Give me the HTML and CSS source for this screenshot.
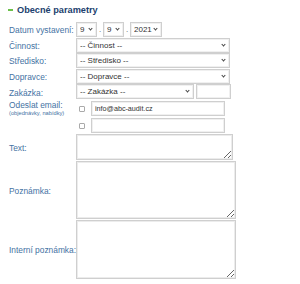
FILE: index.html
```html
<!DOCTYPE html>
<html>
<head>
    <title>Obecné parametry</title>
    <link rel="stylesheet" href="styles.css">
</head>
<body>

<h2 class="title"><span class="dash"></span>Obecné parametry</h2>

<div class="form">
    <label class="lbl">Datum vystavení:</label>
    <div class="ctrl date">
        <span class="sel w-day"><select><option>9</option></select></span>
        <span class="dot">.</span>
        <span class="sel w-day"><select><option>9</option></select></span>
        <span class="dot">.</span>
        <span class="sel w-year"><select><option>2021</option></select></span>
    </div>

    <label class="lbl">Činnost:</label>
    <div class="ctrl">
        <span class="sel w-full"><select><option>-- Činnost --</option></select></span>
    </div>

    <label class="lbl">Středisko:</label>
    <div class="ctrl">
        <span class="sel w-full"><select><option>-- Středisko --</option></select></span>
    </div>

    <label class="lbl">Dopravce:</label>
    <div class="ctrl">
        <span class="sel w-full"><select><option>-- Dopravce --</option></select></span>
    </div>

    <label class="lbl">Zakázka:</label>
    <div class="ctrl">
        <span class="sel w-short"><select><option>-- Zakázka --</option></select></span>
        <input type="text" class="txt w-code">
    </div>

    <label class="lbl top">Odeslat email:<small>(objednávky, nabídky)</small></label>
    <div class="ctrl">
        <input type="checkbox" class="chk">
        <input type="text" class="txt w-mail" value="info@abc-audit.cz">
    </div>

    <span></span>
    <div class="ctrl">
        <input type="checkbox" class="chk">
        <input type="text" class="txt w-mail">
    </div>

    <label class="lbl">Text:</label>
    <div class="ctrl area">
        <textarea class="w-text"></textarea>
    </div>

    <label class="lbl">Poznámka:</label>
    <div class="ctrl area">
        <textarea class="w-note"></textarea>
    </div>

    <label class="lbl">Interní poznámka:</label>
    <div class="ctrl area">
        <textarea class="w-note"></textarea>
    </div>
</div>

</body>
</html>
```

FILE: styles.css
```css
body {
    margin: 0;
    padding: 0 0 0 8px;
    font-family: "Liberation Sans", Arial, sans-serif;
    background: #fff;
}

.title {
    display: flex;
    align-items: center;
    margin: 4px 0 0 0;
    height: 12px;
    font-size: 9.2px;
    font-weight: bold;
    color: #1c3f6e;
}

.dash {
    width: 5px;
    height: 2px;
    background: #6cc04a;
    margin-right: 4px;
}

.form {
    display: grid;
    grid-template-columns: 68px auto;
    grid-template-rows: 16px 15px 16px 15px 17px 17px 16px 27px 59px 60px;
    margin-top: 6px;
}

.lbl {
    align-self: center;
    padding-left: 1px;
    font-size: 8.4px;
    line-height: 10px;
    color: #4472a3;
    white-space: nowrap;
}

.lbl.top {
    align-self: start;
    padding-top: 0;
    line-height: 9px;
}

.lbl small {
    display: block;
    font-size: 5.7px;
    line-height: 6px;
    color: #4472a3;
}

.ctrl {
    display: flex;
    align-items: flex-start;
}

.date .dot {
    width: 6px;
    text-align: center;
    font-size: 8px;
    color: #555;
    line-height: 15px;
}

.sel {
    position: relative;
    display: block;
    height: 15px;
}

.sel select {
    appearance: none;
    -webkit-appearance: none;
    display: block;
    box-sizing: border-box;
    width: 100%;
    height: 15px;
    margin: 0;
    padding: 0 0 0 3px;
    line-height: 13px;
    border: 1px solid #cfcfcf;
    box-shadow: inset 0 0 0 1px #f0f0f0;
    border-radius: 0;
    background: #fff;
    font-family: "Liberation Sans", Arial, sans-serif;
    font-size: 8px;
    color: #333;
}

.sel::after {
    content: "";
    position: absolute;
    right: 5px;
    top: 5px;
    width: 2px;
    height: 2px;
    border-right: 1px solid #444;
    border-bottom: 1px solid #444;
    transform: rotate(45deg);
    pointer-events: none;
}

.w-day { width: 21px; }
.w-year { width: 32px; }
.w-full { width: 154px; }
.w-short { width: 118px; }

.txt {
    box-sizing: border-box;
    height: 15px;
    margin: 0;
    padding: 0 0 0 3px;
    border: 1px solid #cfcfcf;
    box-shadow: inset 0 0 0 1px #f0f0f0;
    font-family: "Liberation Sans", Arial, sans-serif;
    font-size: 7.2px;
    color: #333;
}

.w-code {
    width: 35px;
    margin-left: 2px;
}

.w-mail {
    width: 134px;
}

.chk {
    appearance: none;
    -webkit-appearance: none;
    width: 6px;
    height: 6px;
    margin: 5px 6px 0 3px;
    border: 1px solid #aaa;
    border-radius: 1px;
    background: #fff;
}

.area textarea {
    box-sizing: border-box;
    margin: 0;
    padding: 2px;
    border: 1px solid #cfcfcf;
    box-shadow: inset 0 0 0 1px #ececec;
    height: calc(100% - 1px);
    font-family: "Liberation Sans", Arial, sans-serif;
    font-size: 8px;
}

.w-text { width: 157px; }
.w-note { width: 160px; }
```
